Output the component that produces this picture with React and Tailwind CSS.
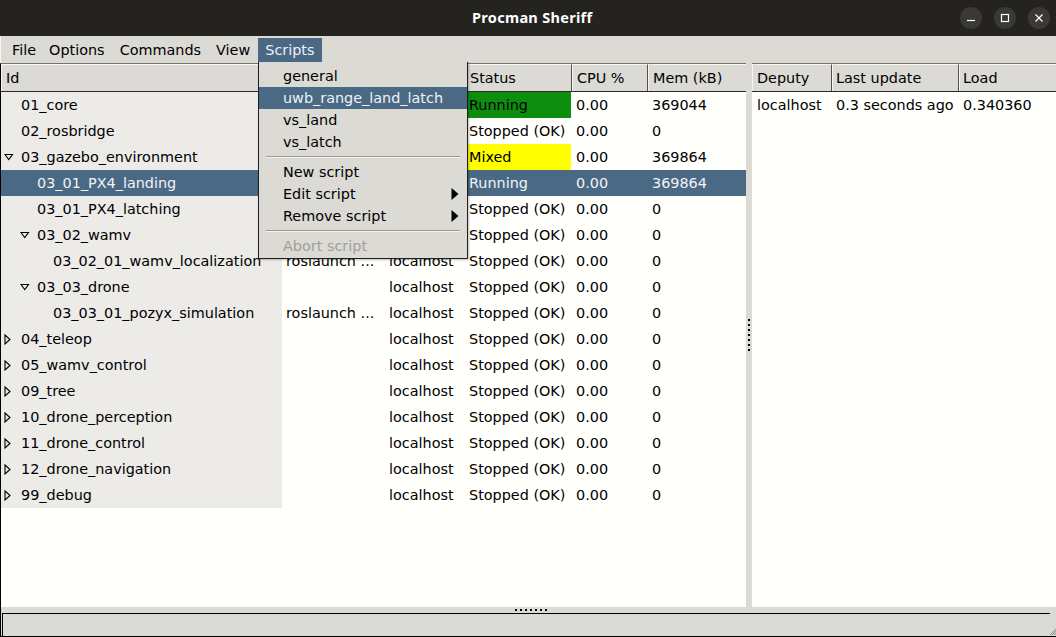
import React from "react";

const rows = [
  { id: "01_core", lvl: 0, arrow: null, cmd: "roslaunch ...", host: "localhost", status: "Running", cpu: "0.00", mem: "369044" },
  { id: "02_rosbridge", lvl: 0, arrow: null, cmd: "roslaunch ...", host: "localhost", status: "Stopped (OK)", cpu: "0.00", mem: "0" },
  { id: "03_gazebo_environment", lvl: 0, arrow: "open", cmd: "", host: "localhost", status: "Mixed", cpu: "0.00", mem: "369864" },
  { id: "03_01_PX4_landing", lvl: 1, arrow: null, cmd: "roslaunch ...", host: "localhost", status: "Running", cpu: "0.00", mem: "369864", sel: true },
  { id: "03_01_PX4_latching", lvl: 1, arrow: null, cmd: "roslaunch ...", host: "localhost", status: "Stopped (OK)", cpu: "0.00", mem: "0" },
  { id: "03_02_wamv", lvl: 1, arrow: "open", cmd: "", host: "localhost", status: "Stopped (OK)", cpu: "0.00", mem: "0" },
  { id: "03_02_01_wamv_localization", lvl: 2, arrow: null, cmd: "roslaunch ...", host: "localhost", status: "Stopped (OK)", cpu: "0.00", mem: "0" },
  { id: "03_03_drone", lvl: 1, arrow: "open", cmd: "", host: "localhost", status: "Stopped (OK)", cpu: "0.00", mem: "0" },
  { id: "03_03_01_pozyx_simulation", lvl: 2, arrow: null, cmd: "roslaunch ...", host: "localhost", status: "Stopped (OK)", cpu: "0.00", mem: "0" },
  { id: "04_teleop", lvl: 0, arrow: "closed", cmd: "", host: "localhost", status: "Stopped (OK)", cpu: "0.00", mem: "0" },
  { id: "05_wamv_control", lvl: 0, arrow: "closed", cmd: "", host: "localhost", status: "Stopped (OK)", cpu: "0.00", mem: "0" },
  { id: "09_tree", lvl: 0, arrow: "closed", cmd: "", host: "localhost", status: "Stopped (OK)", cpu: "0.00", mem: "0" },
  { id: "10_drone_perception", lvl: 0, arrow: "closed", cmd: "", host: "localhost", status: "Stopped (OK)", cpu: "0.00", mem: "0" },
  { id: "11_drone_control", lvl: 0, arrow: "closed", cmd: "", host: "localhost", status: "Stopped (OK)", cpu: "0.00", mem: "0" },
  { id: "12_drone_navigation", lvl: 0, arrow: "closed", cmd: "", host: "localhost", status: "Stopped (OK)", cpu: "0.00", mem: "0" },
  { id: "99_debug", lvl: 0, arrow: "closed", cmd: "", host: "localhost", status: "Stopped (OK)", cpu: "0.00", mem: "0" },
];

const indentClass = ["pl-[3px]", "pl-[19px]", "pl-[35px]"];

function Arrow({ kind, sel }) {
  const c = sel ? "#ffffff" : "#000000";
  if (kind === "open")
    return (
      <svg width="10" height="8" viewBox="0 0 10 8" className="-mt-[2px]">
        <path d="M1 1.5 L8.5 1.5 L4.75 6.5 Z" fill="none" stroke={c} strokeWidth="1.1" />
      </svg>
    );
  if (kind === "closed")
    return (
      <svg width="8" height="11" viewBox="0 0 8 11" className="-mt-[2px]">
        <path d="M1 1 L6 5.5 L1 10 Z" fill="none" stroke={c} strokeWidth="1.1" />
      </svg>
    );
  return null;
}

function HeaderCell({ w, pl, children, last }) {
  return (
    <div
      className={`${w} ${pl} pt-[2px] h-full flex items-center shrink-0 border-t border-l border-t-[#f7f6f3] border-l-[#f7f6f3] ${
        last ? "flex-1" : "border-r border-r-[#55534f]"
      }`}
    >
      {children}
    </div>
  );
}

function Grip({ vertical }) {
  const dots = [0, 1, 2, 3, 4, 5, 6];
  return (
    <div className={vertical ? "flex flex-col gap-[3px]" : "flex gap-[3px]"}>
      {dots.map((d) => (
        <div key={d} className="w-[2px] h-[2px] bg-black" />
      ))}
    </div>
  );
}

function MenuItem({ children, active, disabled, sub }) {
  return (
    <div
      className={`h-[22px] flex items-center pl-[24px] pr-[8px] pt-[2px] ${
        active ? "bg-[#4a6984] text-[#eef2f6]" : disabled ? "text-[#a09e99]" : "text-black"
      }`}
    >
      <span className="flex-1">{children}</span>
      {sub && (
        <svg width="8" height="12" viewBox="0 0 8 12" className="-mt-[2px]">
          <path d="M0.5 0 L7.5 6 L0.5 12 Z" fill="#000" />
        </svg>
      )}
    </div>
  );
}

function Sep() {
  return (
    <div className="h-[8px] flex items-center px-[7px]">
      <div className="h-[2px] w-full border-t border-t-[#9e9a91] border-b border-b-[#f5f4f1]" />
    </div>
  );
}

export default function App() {
  return (
    <div className="w-[1056px] h-[637px] flex flex-col bg-[#dcdad5] overflow-hidden relative font-['DejaVu_Sans',sans-serif] text-[14.4px] text-black">
      {/* Title bar */}
      <div className="h-[36px] shrink-0 bg-[#25231f] flex items-center">
        <div className="pl-[472px] text-white font-bold text-[14.5px] font-['Noto_Sans',sans-serif] tracking-[0.3px]">
          Procman Sheriff
        </div>
        <div className="ml-auto flex gap-[12px] pr-[6px]">
          <div className="w-[22px] h-[22px] rounded-full bg-[#3b3936] flex items-center justify-center">
            <svg width="10" height="10" viewBox="0 0 10 10">
              <path d="M1 7.5 H9" stroke="#fff" strokeWidth="1.2" />
            </svg>
          </div>
          <div className="w-[22px] h-[22px] rounded-full bg-[#3b3936] flex items-center justify-center">
            <svg width="10" height="10" viewBox="0 0 10 10">
              <rect x="1.5" y="1.5" width="7" height="7" fill="none" stroke="#fff" strokeWidth="1.2" />
            </svg>
          </div>
          <div className="w-[22px] h-[22px] rounded-full bg-[#3b3936] flex items-center justify-center">
            <svg width="10" height="10" viewBox="0 0 10 10">
              <path d="M1.5 1.5 L8.5 8.5 M8.5 1.5 L1.5 8.5" stroke="#fff" strokeWidth="1.2" />
            </svg>
          </div>
        </div>
      </div>

      {/* Menubar */}
      <div className="h-[27px] shrink-0 flex pl-[4px] pt-[2px] pb-[1px] border-l border-l-[#f7f6f3]">
        <div className="pl-[7px] pr-[6px] pt-[2px] flex items-center">File</div>
        <div className="px-[7px] pt-[2px] flex items-center">Options</div>
        <div className="pl-[8px] pr-[7px] pt-[2px] flex items-center">Commands</div>
        <div className="pl-[8px] pr-[7px] pt-[2px] flex items-center">View</div>
        <div className="px-[7px] pt-[2px] flex items-center bg-[#4a6984] text-[#eef2f6] ml-[1px]">Scripts</div>
      </div>

      {/* Main panes */}
      <div className="flex-1 flex min-h-0">
        {/* Left tree */}
        <div className="w-[746px] shrink-0 flex flex-col bg-[#fffffc] border-l border-l-black border-t border-t-[#75736e]">
          <div className="h-[28px] shrink-0 flex bg-[#dcdad5] border-b border-b-[#2a2927]">
            <HeaderCell w="w-[282px]" pl="pl-[4px]">Id</HeaderCell>
            <HeaderCell w="w-[103px]" pl="pl-[4px]">Command</HeaderCell>
            <HeaderCell w="w-[81px]" pl="pl-[4px]">Host</HeaderCell>
            <HeaderCell w="w-[105px]" pl="pl-[2px]">Status</HeaderCell>
            <HeaderCell w="w-[76px]" pl="pl-[4px]">CPU %</HeaderCell>
            <HeaderCell w="w-[99px]" pl="pl-[4px]" last>
              Mem (kB)
            </HeaderCell>
          </div>
          {rows.map((r) => {
            const sel = r.sel;
            const statusBg = sel
              ? ""
              : r.status === "Running"
              ? "bg-[#0e8e0e]"
              : r.status === "Mixed"
              ? "bg-[#ffff00]"
              : "";
            return (
              <div
                key={r.id}
                className={`h-[26px] shrink-0 flex whitespace-nowrap ${sel ? "bg-[#4a6984] text-[#f2f4f6]" : ""}`}
              >
                <div
                  className={`w-[281px] shrink-0 flex items-center pt-[2px] ${indentClass[r.lvl]} ${
                    sel ? "" : "bg-[#ecebe8]"
                  }`}
                >
                  <div className="w-[17px] shrink-0 flex items-center">
                    <Arrow kind={r.arrow} sel={sel} />
                  </div>
                  <span>{r.id}</span>
                </div>
                <div className="w-[103px] shrink-0 flex items-center pt-[2px] pl-[4px] overflow-hidden">{r.cmd}</div>
                <div className="w-[81px] shrink-0 flex items-center pt-[2px] pl-[4px]">{r.host}</div>
                <div className={`w-[105px] shrink-0 flex items-center pt-[2px] pl-[3px] ${statusBg}`}>{r.status}</div>
                <div className="w-[76px] shrink-0 flex items-center pt-[2px] pl-[5px]">{r.cpu}</div>
                <div className="flex-1 flex items-center pt-[2px] pl-[5px]">{r.mem}</div>
              </div>
            );
          })}
        </div>

        {/* Vertical sash */}
        <div className="w-[6px] shrink-0 flex items-center justify-center">
          <Grip vertical />
        </div>

        {/* Right tree */}
        <div className="flex-1 flex flex-col bg-[#fffffc] border-t border-t-[#75736e]">
          <div className="h-[28px] shrink-0 flex bg-[#dcdad5] border-b border-b-[#2a2927]">
            <HeaderCell w="w-[80px]" pl="pl-[4px]">Deputy</HeaderCell>
            <HeaderCell w="w-[127px]" pl="pl-[3px]">Last update</HeaderCell>
            <HeaderCell w="w-[97px]" pl="pl-[3px]" last>
              Load
            </HeaderCell>
          </div>
          <div className="h-[26px] shrink-0 flex whitespace-nowrap">
            <div className="w-[80px] shrink-0 flex items-center pt-[2px] pl-[5px]">localhost</div>
            <div className="w-[127px] shrink-0 flex items-center pt-[2px] pl-[4px]">0.3 seconds ago</div>
            <div className="flex-1 flex items-center pt-[2px] pl-[4px]">0.340360</div>
          </div>
        </div>
      </div>

      {/* Bottom sash */}
      <div className="h-[6px] shrink-0 flex items-center pl-[514px] border-l border-l-black">
        <Grip />
      </div>

      {/* Status bar */}
      <div className="h-[24px] shrink-0 flex border-l border-l-black border-b border-b-black">
        <div className="flex-1 ml-[1px] border-t border-l border-black bg-[#dcdad5]" />
        <div className="w-[6px] shrink-0 flex items-end">
          <svg width="6" height="22" viewBox="0 0 6 22">
            <path d="M0 21 L6 15 M2 21 L6 17 M4 21 L6 19" stroke="#8a8882" strokeWidth="1" />
          </svg>
        </div>
      </div>

      {/* Scripts dropdown menu */}
      <div className="absolute left-[258px] top-[62px] w-[210px] bg-[#dcdad5] border border-[#1e1e1e] border-t-0 pt-[3px] pb-[1px] shadow-[1px_1px_2px_rgba(0,0,0,0.25)]">
        <MenuItem>general</MenuItem>
        <MenuItem active>uwb_range_land_latch</MenuItem>
        <MenuItem>vs_land</MenuItem>
        <MenuItem>vs_latch</MenuItem>
        <Sep />
        <MenuItem>New script</MenuItem>
        <MenuItem sub>Edit script</MenuItem>
        <MenuItem sub>Remove script</MenuItem>
        <Sep />
        <MenuItem disabled>Abort script</MenuItem>
      </div>
    </div>
  );
}
